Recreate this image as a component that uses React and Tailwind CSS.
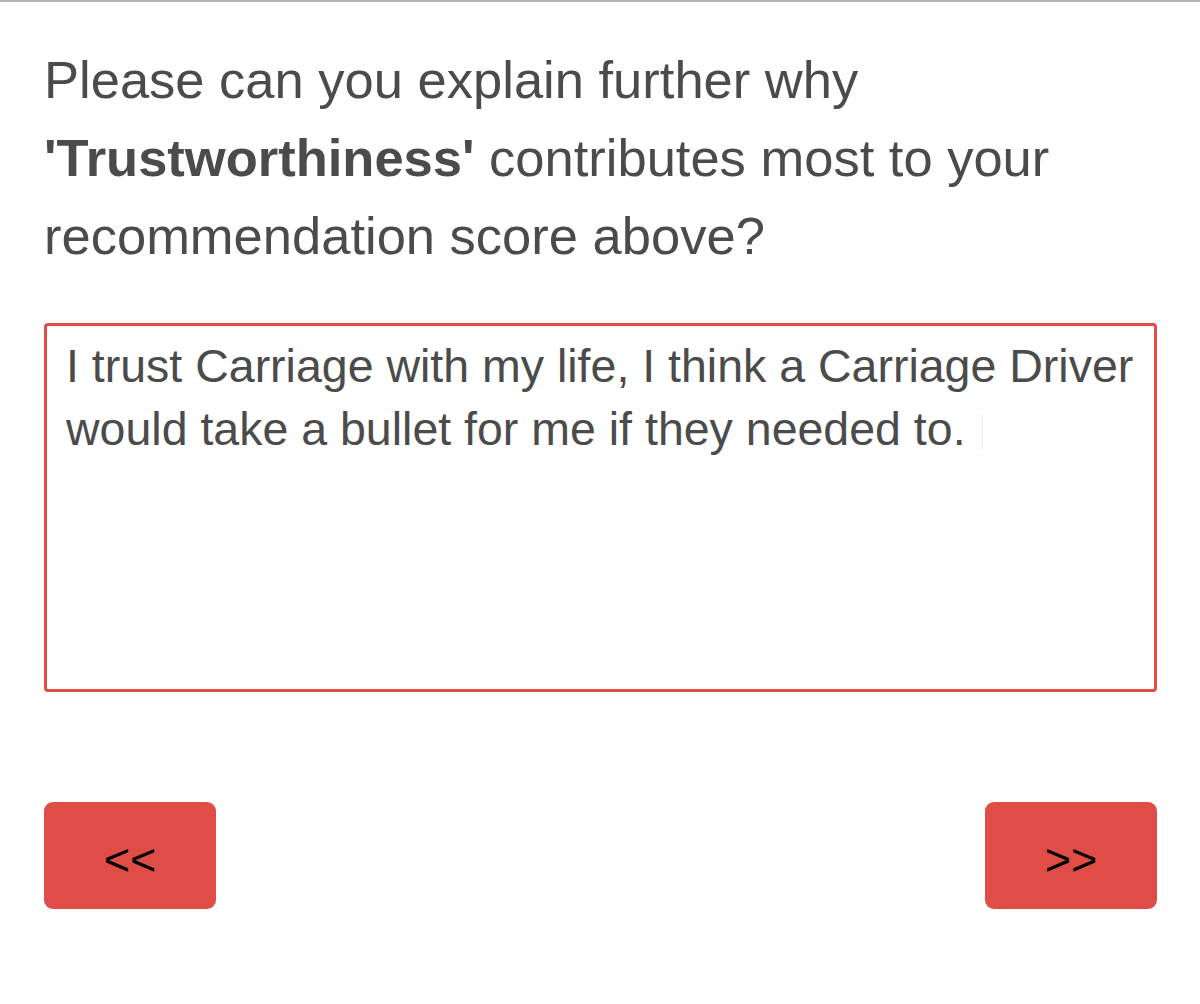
import React from "react";

function NavButton({ children }) {
  return (
    <button
      type="button"
      className="flex h-[107px] w-[172px] items-center justify-center rounded-[9px] bg-[#e04c46] pt-[8px] text-[45px] leading-none text-black"
    >
      {children}
    </button>
  );
}

export default function App() {
  return (
    <div className="min-h-[1004px] w-[1200px] border-t-2 border-[#b4b4b4] bg-white font-['Liberation_Sans',Arial,sans-serif]">
      <div className="px-[44px] pt-[39px]">
        <h2 className="text-[52.5px] leading-[78px] font-normal text-[#4b4b4b]">
          Please can you explain further why
          <br />
          <strong className="font-bold">'Trustworthiness'</strong> contributes
          most to your
          <br />
          recommendation score above?
        </h2>

        <div className="mt-[48px] h-[369px] w-[1113px] whitespace-nowrap rounded-[4px] border-[3px] border-[#e04c46] pl-[19px] pt-[9px] text-[46.5px] leading-[63px] text-[#4b4b4b]">
          I trust Carriage with my life, I think a Carriage Driver
          <br />
          would take a bullet for me if they needed to.
          <span className="ml-[16px] inline-block h-[38px] w-px translate-y-[6px] bg-[#ececec]" />
        </div>

        <div className="mt-[110px] flex w-[1113px] justify-between">
          <NavButton>&lt;&lt;</NavButton>
          <NavButton>&gt;&gt;</NavButton>
        </div>
      </div>
    </div>
  );
}
